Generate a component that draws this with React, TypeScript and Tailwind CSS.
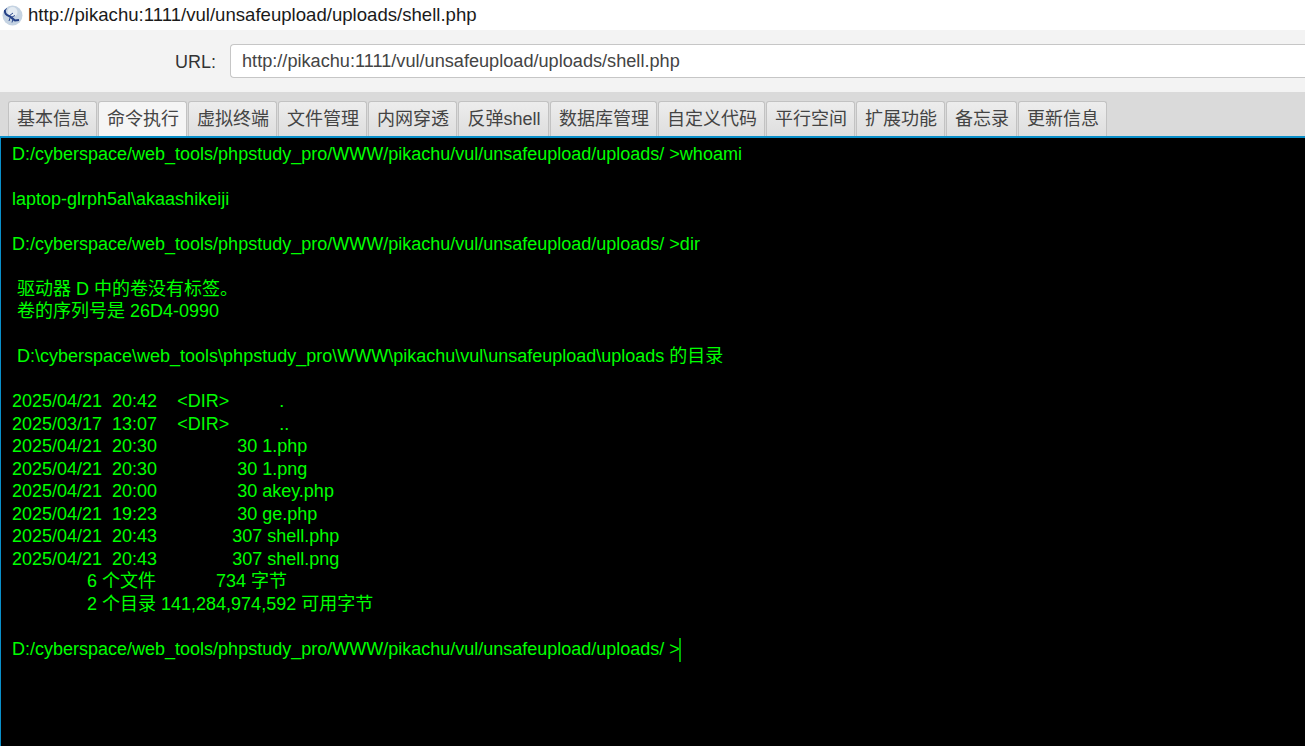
const tabs = [
  { label: "基本信息", width: "w-[89px]" },
  { label: "命令执行", width: "w-[89px]", active: true },
  { label: "虚拟终端", width: "w-[89px]" },
  { label: "文件管理", width: "w-[89px]" },
  { label: "内网穿透", width: "w-[89px]" },
  { label: "反弹shell", width: "w-[91px]" },
  { label: "数据库管理", width: "w-[107px]" },
  { label: "自定义代码", width: "w-[107px]" },
  { label: "平行空间", width: "w-[89px]" },
  { label: "扩展功能", width: "w-[89px]" },
  { label: "备忘录", width: "w-[71px]" },
  { label: "更新信息", width: "w-[89px]" },
];

const output = `D:/cyberspace/web_tools/phpstudy_pro/WWW/pikachu/vul/unsafeupload/uploads/ >whoami

laptop-glrph5al\\akaashikeiji

D:/cyberspace/web_tools/phpstudy_pro/WWW/pikachu/vul/unsafeupload/uploads/ >dir

 驱动器 D 中的卷没有标签。
 卷的序列号是 26D4-0990

 D:\\cyberspace\\web_tools\\phpstudy_pro\\WWW\\pikachu\\vul\\unsafeupload\\uploads 的目录

2025/04/21  20:42    <DIR>          .
2025/03/17  13:07    <DIR>          ..
2025/04/21  20:30                30 1.php
2025/04/21  20:30                30 1.png
2025/04/21  20:00                30 akey.php
2025/04/21  19:23                30 ge.php
2025/04/21  20:43               307 shell.php
2025/04/21  20:43               307 shell.png
               6 个文件            734 字节
               2 个目录 141,284,974,592 可用字节

D:/cyberspace/web_tools/phpstudy_pro/WWW/pikachu/vul/unsafeupload/uploads/ >`;

const fontStack = "font-['Liberation_Sans','Noto_Sans_CJK_SC',sans-serif]";

// round app icon with the little scorpion on it
function AppIcon() {
  return (
    <svg width="21" height="21" viewBox="0 0 21 21" className="shrink-0">
      <circle cx="10.5" cy="10.5" r="10" fill="#c5d3e2" />
      <circle cx="10.5" cy="7" r="5" fill="#e4ebf2" />
      <path d="M3 5 C2.5 8 4 10 7 11 C9 12 11 14 13 15.5 L17 15" fill="none" stroke="#233f86" strokeWidth="2" />
      <path d="M3 5 L5 3.5 M7 11 L11 8 M9 12.5 L13 10.5 M8 13 L7 16 M11 14 L10 17.5" fill="none" stroke="#2f4b8f" strokeWidth="1" />
    </svg>
  );
}

export default function App() {
  return (
    <div className={`flex h-[746px] w-[1305px] flex-col overflow-hidden bg-black ${fontStack}`}>
      <div className="flex h-[30px] items-center gap-[5px] bg-white pl-[2px] text-[18.6px] text-[#1a1a1a]">
        <AppIcon />
        <span>http://pikachu:1111/vul/unsafeupload/uploads/shell.php</span>
      </div>
      <div className="flex h-[62px] items-start bg-[#f3f3f3] pt-[14px] pl-[175px]">
        <span className="mr-[14px] mt-[8px] text-[18px] leading-5 text-[#333]">URL:</span>
        <div className="flex h-[34px] flex-1 items-center rounded-l-[4px] border border-r-0 border-[#c6c6c6] bg-white pl-[11px] pt-px text-[18.15px] text-[#444]">
          http://pikachu:1111/vul/unsafeupload/uploads/shell.php
        </div>
      </div>
      <div className="flex h-[44px] items-end gap-px bg-[#dadada] pl-2">
        {tabs.map((tab) => (
          <div
            key={tab.label}
            className={`flex h-[35px] ${tab.width} items-center justify-center rounded-t-[3px] border border-b-0 border-[#c2c2c2] pl-px text-[18px] ${
              tab.active
                ? "bg-[#f5f5f5] text-[#444]"
                : "bg-gradient-to-b from-[#ededed] to-[#dedede] text-[#444]"
            }`}
          >
            {tab.label}
          </div>
        ))}
      </div>
      <div className="flex-1 border-t-2 border-l border-[#0a8fc9] bg-black pl-[11px] pt-[4.5px]">
        <pre className={`whitespace-pre text-[18px] leading-[22.5px] text-[#00ff00] ${fontStack}`}>
          {output}
          <span className="relative">
            <span className="absolute -left-px -top-[1px] h-[24px] w-[2px] bg-[#00b000]" />
          </span>
        </pre>
      </div>
    </div>
  );
}
